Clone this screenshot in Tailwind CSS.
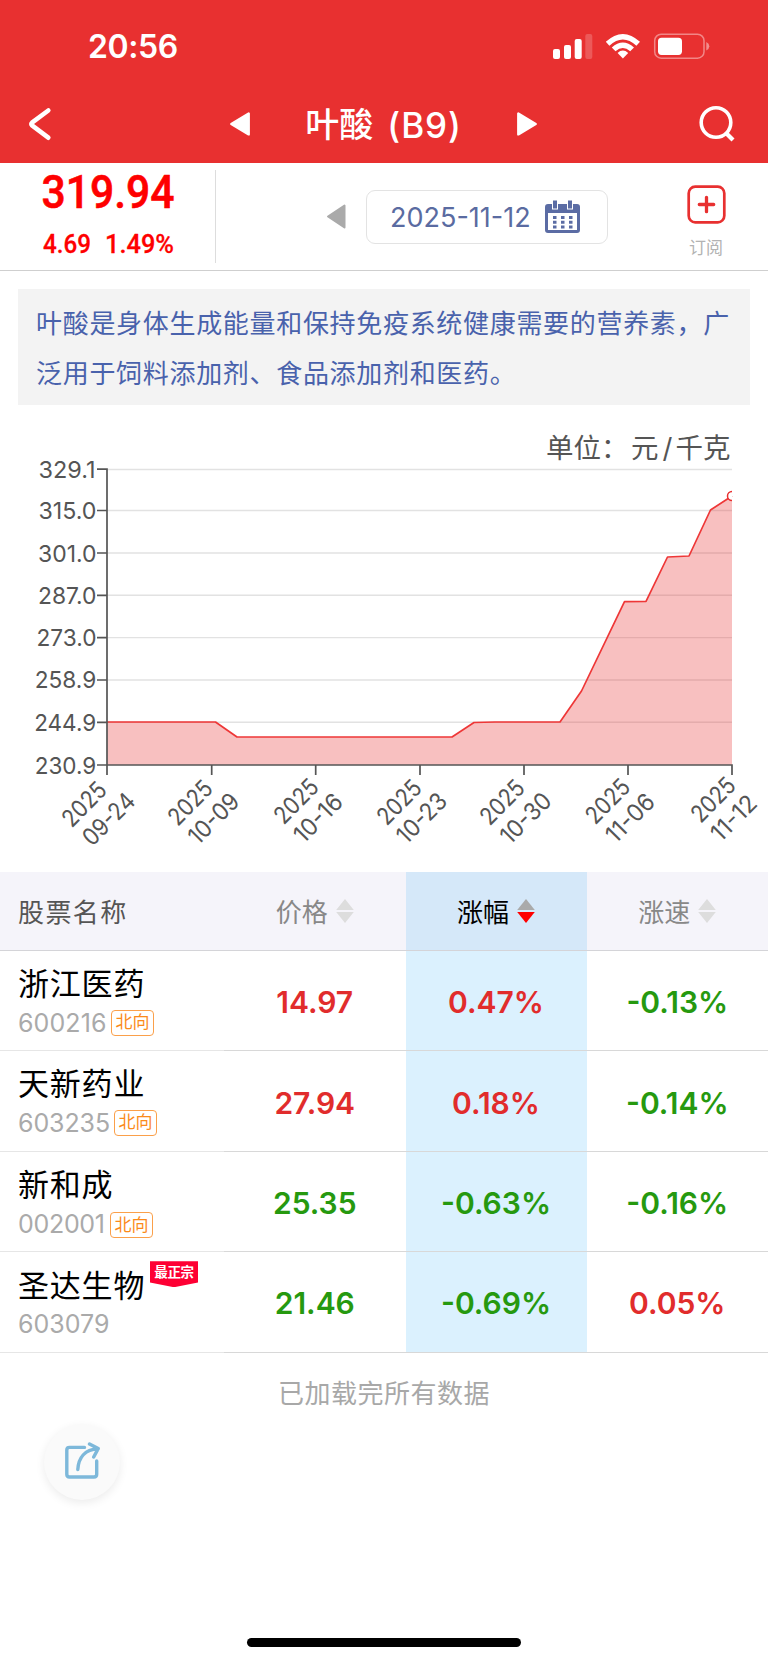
<!DOCTYPE html>
<html lang="zh-CN">
<head>
<meta charset="utf-8">
<title>叶酸（B9）</title>
<script src="https://cdn.jsdelivr.net/npm/@tailwindcss/browser@4"></script>
</head>
<body class="w-[768px] h-[1662px] bg-white overflow-hidden font-['Inter','Noto_Sans_CJK_SC',sans-serif] relative">
<header class="h-[163px] bg-[#e83030] text-white flex flex-col">
  <div class="h-[92px] flex items-center justify-between pl-[88px] pr-[58px]">
    <span class="mt-[2px] text-[32px] leading-none font-semibold tracking-[-0.4px]">20:56</span>
    <svg class="w-[158px] h-[30px]" viewBox="552 30 158 30" fill="#fff">
      <rect x="553" y="48" width="7" height="10" rx="2"/><rect x="564" y="44" width="7" height="14" rx="2"/><rect x="574.7" y="38" width="7" height="20" rx="2"/><rect x="585.3" y="33" width="7" height="25" rx="2" opacity=".2"/>
      <path d="M605.8 40.8Q622.8 25 640 40.8L636.4 44.7Q622.8 32.3 609.4 44.7Z"/>
      <path d="M611.8 46.6Q622.8 36.6 634 46.6L630.2 50.2Q622.8 43.6 615.5 50.2Z"/>
      <path d="M617.6 52Q622.8 47.2 628.2 52L622.9 57.6Z"/>
      <rect x="654.7" y="33.2" width="49.3" height="24" rx="6.5" fill="none" stroke="#fff" stroke-opacity=".42" stroke-width="1.5"/>
      <rect x="658" y="36.7" width="24" height="17.2" rx="3.6"/>
      <path d="M706.3 41q3 1.5 3 4.3t-3 4.3z" opacity=".45"/>
    </svg>
  </div>
  <div class="h-[71px] flex items-center justify-between pl-[28px] pr-[33px] pb-[7px]">
    <svg class="w-[24px] h-[36px]" viewBox="0 0 24 36" fill="none" stroke="#fff" stroke-width="4.6" stroke-linecap="round" stroke-linejoin="round"><path d="M20.3 4.5 4 16.7q-1.4 1.2 0 2.6L20.3 31.7"/></svg>
    <div class="flex items-center ml-[18px]">
      <svg class="w-[20px] h-[24px] mt-[-1px]" viewBox="0 0 20 24" fill="#fff" stroke="#fff" stroke-width="2.4" stroke-linejoin="round"><path d="M1.3 12 18.7 1.6V22.4Z"/></svg>
      <h1 class="w-[267px] h-[40px] pt-[2px] flex items-center justify-center font-medium text-[34px] leading-none whitespace-nowrap"><span>叶酸</span><span class="ml-[14px] text-[35px] tracking-[0.9px]">(B9)</span></h1>
      <svg class="w-[20px] h-[24px] mt-[-1px]" viewBox="0 0 20 24" fill="#fff" stroke="#fff" stroke-width="2.4" stroke-linejoin="round"><path d="M18.7 12 1.3 1.6V22.4Z"/></svg>
    </div>
    <svg class="w-[38px] h-[38px] mt-[-1px]" viewBox="0 0 38 38" fill="none" stroke="#fff" stroke-width="3.6"><circle cx="19" cy="17.5" r="14.8"/><path d="m28.500 27.500 7.500 7.500" stroke-width="4.2"/></svg>
  </div>
</header>

<section class="h-[108px] border-b border-[#cfcfcf] flex">
  <div class="w-[216px] flex items-center">
    <div class="w-full h-[93px] border-r-[1.5px] border-[#ddd] pl-[42px] text-[#fe0000]">
      <svg class="w-[140px] h-[93px]" viewBox="42 171 140 93" fill="#fe0000" stroke="#fe0000" font-family="Roboto, sans-serif" font-weight="500">
        <text x="41.5" y="208.500" font-size="46" stroke-width=".6" textLength="133" lengthAdjust="spacingAndGlyphs">319.94</text>
        <text x="43" y="254" font-size="26" stroke-width=".3" textLength="48" lengthAdjust="spacingAndGlyphs">4.69</text>
        <text x="105" y="254" font-size="26" stroke-width=".3" textLength="69" lengthAdjust="spacingAndGlyphs">1.49%</text>
      </svg>
    </div>
  </div>
  <div class="flex-1 flex items-center pl-[110px]">
    <svg class="w-[20px] h-[25px]" viewBox="0 0 20 25" fill="#aaa" stroke="#aaa" stroke-width="2" stroke-linejoin="round"><path d="M2 12.5 18.5 1.5v22Z"/></svg>
    <div class="ml-[20px] w-[242px] h-[54px] border border-[#e3e3e3] rounded-[9px] flex items-center justify-between pl-[23px] pr-[27px]">
      <span class="mt-[2px] text-[27px] leading-none text-[#5a6ba1] whitespace-nowrap">2025-11-12</span>
      <svg class="w-[35px] h-[33px]" viewBox="0 0 35 33"><path fill="#5b6ca4" fill-rule="evenodd" d="M3 4H32q3 0 3 3V30q0 3-3 3H3q-3 0-3-3V7q0-3 3-3ZM3 13V30H32V13Z"/><g fill="#5b6ca4" stroke="#fff" stroke-width="1"><rect x="7.5" y="0" width="5" height="9"/><rect x="22.5" y="0" width="5" height="9"/></g><g fill="#5b6ca4"><path d="M8 16h3.500v3H8zM16 16h3.500v3H16zM24 16h3.500v3H24zM8 20.700h3.500v3H8zM16 20.700h3.500v3H16zM24 20.700h3.500v3H24zM8 25.400h3.500v3H8zM16 25.400h3.500v3H16zM24 25.400h3.500v3H24z"/></g></svg>
    </div>
    <div class="ml-[77px] mt-[8px] w-[42px] flex flex-col items-center">
      <svg class="w-[39px] h-[39px]" viewBox="0 0 39 39" fill="none" stroke="#e83030"><rect x="1.7" y="1.7" width="35.6" height="35.6" rx="6.5" stroke-width="2.7"/><path stroke-width="3.3" stroke-linecap="round" d="M12.300 19.500h14.400M19.500 12.300v14.400"/></svg>
      <span class="mt-[16px] text-[17px] leading-none text-[#b3b3b3]">订阅</span>
    </div>
  </div>
</section>

<section class="mt-[18px] mx-[18px] h-[116px] bg-[#f3f3f3] pl-[18px] pt-[8px] text-[#4962ac] text-[26px] leading-[50px] tracking-[0.69px] whitespace-nowrap font-['Noto_Sans_CJK_SC']">
  <p>叶酸是身体生成能量和保持免疫系统健康需要的营养素，广</p>
  <p>泛用于饲料添加剂、食品添加剂和医药。</p>
</section>

<section class="h-[467px]">
  <svg class="w-[768px] h-[467px]" viewBox="0 405 768 467" fill="#555" font-family="Inter, 'Noto Sans CJK SC', sans-serif" font-size="24">
    <text x="546" y="458" font-size="27.5" font-family="'Noto Sans CJK SC', sans-serif">单位：<tspan x="631">元</tspan><tspan x="662.500" font-family="Inter">/</tspan><tspan x="675.500">千克</tspan></text>
    <path d="M107 469.500H732M107 510.500H732M107 553H732M107 595.300H732M107 637.600H732M107 680H732M107 722.300H732" stroke="#e2e2e2" stroke-width="1.4"/>
    <path d="M107 722H215.500L237 737H452L474 722.500 495 722H560L581.500 691 624.500 601.700 646 601.300 667.500 557 689 556 710.500 510 732 496V765H107Z" fill="#e83030" fill-opacity=".3"/>
    <path d="M107 722H215.500L237 737H452L474 722.500 495 722H560L581.500 691 624.500 601.700 646 601.300 667.500 557 689 556 710.500 510 732 496" fill="none" stroke="#ee3737" stroke-width="1.7" stroke-linejoin="round"/>
    <clipPath id="plot"><rect x="107" y="460" width="625" height="305"/></clipPath>
    <circle cx="732" cy="496" r="4.5" fill="#fff" stroke="#e83030" stroke-width="1.5" clip-path="url(#plot)"/>
    <path d="M97 469.200H107V775M97 510.500h10M97 553h10M97 595.300h10M97 637.600h10M97 680h10M97 722.300h10M97 765H732V775M211.700 765v10M315.700 765v10M420 765v10M524 765v10M628 765v10" fill="none" stroke="#555" stroke-width="1.7"/>
    <g font-size="23.5">
      <text x="38.500" y="477.500" textLength="57" lengthAdjust="spacingAndGlyphs">329.1</text>
      <text x="38.500" y="519" textLength="58" lengthAdjust="spacingAndGlyphs">315.0</text>
      <text x="38" y="561.500" textLength="58.500" lengthAdjust="spacingAndGlyphs">301.0</text>
      <text x="38" y="603.800" textLength="58.500" lengthAdjust="spacingAndGlyphs">287.0</text>
      <text x="36.500" y="646" textLength="60" lengthAdjust="spacingAndGlyphs">273.0</text>
      <text x="34.700" y="688.300" textLength="61.500" lengthAdjust="spacingAndGlyphs">258.9</text>
      <text x="34.200" y="730.500" textLength="62" lengthAdjust="spacingAndGlyphs">244.9</text>
      <text x="34.700" y="773.500" textLength="61.500" lengthAdjust="spacingAndGlyphs">230.9</text>
    </g>
    <g text-anchor="middle">
      <g transform="translate(84 804) rotate(-45)"><text y="8.500" textLength="52" lengthAdjust="spacingAndGlyphs">2025</text></g>
      <g transform="translate(108.500 819) rotate(-45)"><text y="8.500" textLength="63" lengthAdjust="spacingAndGlyphs">09-24</text></g>
      <g transform="translate(190 802.500) rotate(-45)"><text y="8.500" textLength="52" lengthAdjust="spacingAndGlyphs">2025</text></g>
      <g transform="translate(213.500 818.500) rotate(-45)"><text y="8.500" textLength="61" lengthAdjust="spacingAndGlyphs">10-09</text></g>
      <g transform="translate(296 801) rotate(-45)"><text y="8.500" textLength="52" lengthAdjust="spacingAndGlyphs">2025</text></g>
      <g transform="translate(318 818) rotate(-45)"><text y="8.500" textLength="58" lengthAdjust="spacingAndGlyphs">10-16</text></g>
      <g transform="translate(399 802) rotate(-45)"><text y="8.500" textLength="52" lengthAdjust="spacingAndGlyphs">2025</text></g>
      <g transform="translate(421.500 818) rotate(-45)"><text y="8.500" textLength="60" lengthAdjust="spacingAndGlyphs">10-23</text></g>
      <g transform="translate(502 802) rotate(-45)"><text y="8.500" textLength="52" lengthAdjust="spacingAndGlyphs">2025</text></g>
      <g transform="translate(525.500 818) rotate(-45)"><text y="8.500" textLength="61" lengthAdjust="spacingAndGlyphs">10-30</text></g>
      <g transform="translate(607.500 801) rotate(-45)"><text y="8.500" textLength="52" lengthAdjust="spacingAndGlyphs">2025</text></g>
      <g transform="translate(630 818) rotate(-45)"><text y="8.500" textLength="58" lengthAdjust="spacingAndGlyphs">11-06</text></g>
      <g transform="translate(713 799.500) rotate(-45)"><text y="8.500" textLength="52" lengthAdjust="spacingAndGlyphs">2025</text></g>
      <g transform="translate(733.500 818) rotate(-45)"><text y="8.500" textLength="54" lengthAdjust="spacingAndGlyphs">11-12</text></g>
    </g>
  </svg>
</section>

<section>
  <div class="h-[79px] grid grid-cols-[224px_181.5px_181px_181.5px] border-b border-[#d4d4d8] bg-[#f5f4fa] text-[26px] leading-none text-[#888]">
    <div class="flex items-center pl-[18px] pt-[3px] text-[#555] tracking-[1.4px]">股票名称</div>
    <div class="flex items-center justify-center gap-[8px]"><span class="mt-[3px]">价格</span><svg class="w-[18px] h-[24px]" viewBox="0 0 18 24" fill="#ddd"><path d="M9 0 17.800 11H.2ZM9 24 17.800 13H.2Z"/></svg></div>
    <div class="flex items-center justify-center gap-[8px] bg-[#d5e8f9] text-black"><span class="mt-[3px]">涨幅</span><svg class="w-[18px] h-[24px]" viewBox="0 0 18 24"><path fill="#aaa" d="M9 0 17.800 11H.2Z"/><path fill="#fe0000" d="M9 24 17.800 13H.2Z"/></svg></div>
    <div class="flex items-center justify-center gap-[8px]"><span class="mt-[3px]">涨速</span><svg class="w-[18px] h-[24px]" viewBox="0 0 18 24" fill="#ddd"><path d="M9 0 17.800 11H.2ZM9 24 17.800 13H.2Z"/></svg></div>
  </div>

  <div class="h-[100.4px] grid grid-cols-[224px_181.5px_181px_181.5px] font-semibold text-[30px] leading-none text-[#26990f]">
    <div class="border-b border-[#e6e6e6] pl-[18px] pt-[14px] font-normal"><div class="h-[36px] flex items-center text-[31px] tracking-[0.8px] text-black">浙江医药</div><div class="mt-[7px] h-[28px] flex items-center text-[#aaa] text-[25px]"><span class="mt-[2px] w-[93px] tracking-[0.1px]">600216</span><span class="mt-[1px] w-[43px] h-[26px] border-[1.5px] border-[#fba04a] rounded-[4px] flex items-center justify-center text-[17px] text-[#fb8a1a]">北向</span></div></div>
    <div class="border-b border-[#d8d8d8] pt-[3px] flex items-center justify-center text-[#e12c2c]">14.97</div>
    <div class="border-b border-[#d8d8d8] pt-[3px] flex items-center justify-center bg-[#dbf1fe] text-[#e12c2c]">0.47%</div>
    <div class="border-b border-[#d8d8d8] pt-[3px] flex items-center justify-center">-0.13%</div>
  </div>
  <div class="h-[100.4px] grid grid-cols-[224px_181.5px_181px_181.5px] font-semibold text-[30px] leading-none text-[#26990f]">
    <div class="border-b border-[#e6e6e6] pl-[18px] pt-[14px] font-normal"><div class="h-[36px] flex items-center text-[31px] tracking-[0.8px] text-black">天新药业</div><div class="mt-[7px] h-[28px] flex items-center text-[#aaa] text-[25px]"><span class="mt-[2px] w-[96px] tracking-[-0.1px]">603235</span><span class="mt-[1px] w-[43px] h-[26px] border-[1.5px] border-[#fba04a] rounded-[4px] flex items-center justify-center text-[17px] text-[#fb8a1a]">北向</span></div></div>
    <div class="border-b border-[#d8d8d8] pt-[3px] flex items-center justify-center text-[#e12c2c]">27.94</div>
    <div class="border-b border-[#d8d8d8] pt-[3px] flex items-center justify-center bg-[#dbf1fe] text-[#e12c2c]">0.18%</div>
    <div class="border-b border-[#d8d8d8] pt-[3px] flex items-center justify-center">-0.14%</div>
  </div>
  <div class="h-[100.4px] grid grid-cols-[224px_181.5px_181px_181.5px] font-semibold text-[30px] leading-none text-[#26990f]">
    <div class="border-b border-[#e6e6e6] pl-[18px] pt-[15px] font-normal"><div class="h-[36px] flex items-center text-[31px] tracking-[0.8px] text-black">新和成</div><div class="mt-[6px] h-[28px] flex items-center text-[#aaa] text-[25px]"><span class="mt-[3px] w-[92px] tracking-[-0.3px]">002001</span><span class="mt-[5px] w-[43px] h-[26px] border-[1.5px] border-[#fba04a] rounded-[4px] flex items-center justify-center text-[17px] text-[#fb8a1a]">北向</span></div></div>
    <div class="border-b border-[#d8d8d8] pt-[3px] flex items-center justify-center">25.35</div>
    <div class="border-b border-[#d8d8d8] pt-[3px] flex items-center justify-center bg-[#dbf1fe]">-0.63%</div>
    <div class="border-b border-[#d8d8d8] pt-[3px] flex items-center justify-center">-0.16%</div>
  </div>
  <div class="h-[100.4px] grid grid-cols-[224px_181.5px_181px_181.5px] font-semibold text-[30px] leading-none text-[#26990f]">
    <div class="border-b border-[#e6e6e6] pl-[18px] pt-[15px] font-normal"><div class="h-[36px] flex items-center text-[31px] tracking-[0.8px] text-black"><span class="w-[132px]">圣达生物</span><span class="relative -top-[11px] w-[48px] h-[26px] pt-[4px] bg-[#fe0034] [clip-path:polygon(0_0,100%_0,100%_82%,50%_100%,0_82%)] text-center text-[13.5px] leading-[15px] tracking-[-0.3px] font-bold text-white whitespace-nowrap">最正宗</span></div><div class="mt-[6px] h-[28px] flex items-center text-[#aaa] text-[25px]"><span class="mt-[3px]">603079</span></div></div>
    <div class="border-b border-[#d8d8d8] pt-[3px] flex items-center justify-center">21.46</div>
    <div class="border-b border-[#d8d8d8] pt-[3px] flex items-center justify-center bg-[#dbf1fe]">-0.69%</div>
    <div class="border-b border-[#d8d8d8] pt-[3px] flex items-center justify-center text-[#e12c2c]">0.05%</div>
  </div>
</section>

<p class="mt-[28px] h-[26px] flex items-center justify-center text-[26px] leading-none tracking-[0.5px] text-[#a8a8a8]">已加载完所有数据</p>

<button class="absolute left-[44px] top-[1424px] w-[76px] h-[76px] rounded-full bg-[#fafafa] shadow-[0_3px_10px_rgba(0,0,0,0.08)] flex items-center justify-center">
  <svg class="w-[40px] h-[40px]" viewBox="62 1442 40 40" fill="none" stroke="#7db8da" stroke-width="3.4" stroke-linecap="round" stroke-linejoin="round"><path d="M84.500 1447.400H69.500q-2.700 0-2.700 2.700V1474.300q0 2.700 2.700 2.700H94q2.700 0 2.700-2.700V1461"/><path d="M77.800 1469.500C78.500 1458 84.500 1449.500 98 1448.800M89.500 1444 98.200 1448.600 93.700 1457"/></svg>
</button>
<div class="absolute left-[247px] top-[1638px] w-[274px] h-[9px] rounded-full bg-black"></div>
</body>
</html>
